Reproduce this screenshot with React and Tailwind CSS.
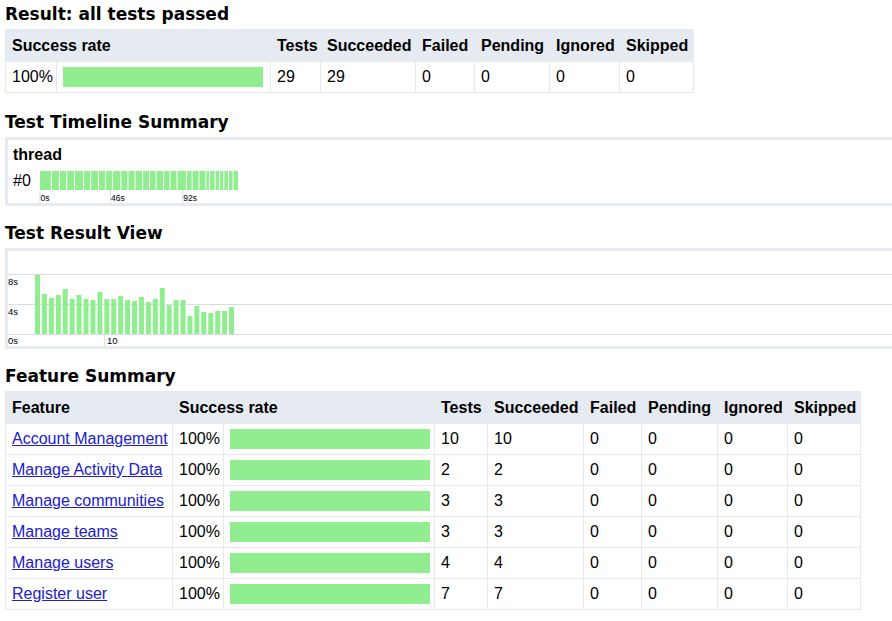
import React from 'react'

const durations = [59, 40, 36, 39, 45, 35, 39, 35, 34, 42, 35, 35, 38, 34, 33, 37, 32, 35, 46, 29, 34, 34, 18, 28, 22, 21, 23, 23, 27]

const features = [
  { name: 'Account Management', tests: 10 },
  { name: 'Manage Activity Data', tests: 2 },
  { name: 'Manage communities', tests: 3 },
  { name: 'Manage teams', tests: 3 },
  { name: 'Manage users', tests: 4 },
  { name: 'Register user', tests: 7 },
]

const Heading = ({ children, className = '' }) => (
  <h2 className={`pl-[5px] h-[29px] leading-[29px] text-[17px] font-bold text-black ${className}`} style={{ fontFamily: '"DejaVu Sans", sans-serif' }}>
    {children}
  </h2>
)

const Bar = () => <div className='h-[20px] w-[200px] bg-[#90ee90]' />

const th = 'px-[6px] h-[32px] text-left font-bold bg-[#e6ebf2] border border-[#e6ebf2]'
const td = 'px-[6px] h-[31px] border border-[#e8e8e8]'

const Timeline = () => {
  const total = durations.reduce((a, b) => a + b, 0)
  const s = 199 / total
  let cum = 0
  return (
    <svg width='220' height='36' className='ml-[5px] block'>
      {durations.map((d, i) => {
        const x = 4 + cum * s
        cum += d
        return <rect key={i} x={x} y='4' width={Math.max(d * s - 1, 1)} height='19' fill='#90ee90' />
      })}
      {[[4, '0s'], [74.5, '46s'], [146.7, '92s']].map(([x, t]) => (
        <g key={t}>
          <line x1={x} x2={x} y1='23' y2='36' stroke='#dddddd' strokeWidth='1' />
          <text x={x + 0.5} y='34' fontSize='8.5' fill='#000' fontFamily='"Liberation Sans", sans-serif'>{t}</text>
        </g>
      ))}
    </svg>
  )
}

const ResultChart = () => (
  <svg width='900' height='95' className='block'>
    {[23, 53, 83].map((y) => (
      <line key={y} x1='0' x2='900' y1={y + 0.5} y2={y + 0.5} stroke='#dddddd' strokeWidth='1' />
    ))}
    <text x='0' y='34' fontSize='9.5' fontFamily='"Liberation Sans", sans-serif'>8s</text>
    <text x='0' y='64' fontSize='9.5' fontFamily='"Liberation Sans", sans-serif'>4s</text>
    <text x='0' y='93' fontSize='9.5' fontFamily='"Liberation Sans", sans-serif'>0s</text>
    <line x1='96.5' x2='96.5' y1='83' y2='95' stroke='#dddddd' strokeWidth='1' />
    <text x='99' y='93' fontSize='9.5' fontFamily='"Liberation Sans", sans-serif'>10</text>
    {durations.map((d, i) => (
      <rect key={i} x={27 + i * 6.93} y={83 - d} width='5' height={d} fill='#90ee90' />
    ))}
  </svg>
)

const App = () => {
  return (
    <div className='w-[892px] h-[621px] overflow-hidden bg-white text-black text-[16px]' style={{ fontFamily: '"Liberation Sans", Arial, sans-serif' }}>
      <Heading>Result: all tests passed</Heading>
      <table className='ml-[5px] border-collapse table-fixed w-[688px]'>
        <colgroup>
          <col className='w-[51px]' />
          <col className='w-[214px]' />
          <col className='w-[50px]' />
          <col className='w-[95px]' />
          <col className='w-[59px]' />
          <col className='w-[75px]' />
          <col className='w-[70px]' />
          <col className='w-[74px]' />
        </colgroup>
        <thead>
          <tr>
            <th colSpan={2} className={th}>Success rate</th>
            <th className={th}>Tests</th>
            <th className={th}>Succeeded</th>
            <th className={th}>Failed</th>
            <th className={th}>Pending</th>
            <th className={th}>Ignored</th>
            <th className={th}>Skipped</th>
          </tr>
        </thead>
        <tbody>
          <tr>
            <td className={td}>100%</td>
            <td className={td}><Bar /></td>
            <td className={td}>29</td>
            <td className={td}>29</td>
            <td className={td}>0</td>
            <td className={td}>0</td>
            <td className={td}>0</td>
            <td className={td}>0</td>
          </tr>
        </tbody>
      </table>

      <Heading className='mt-[15px]'>Test Timeline Summary</Heading>
      <div className='ml-[5px] w-[900px] border-[3px] border-[#e6ebf2] pl-[5px] pt-[6px]'>
        <div className='h-[18px] leading-[18px] font-bold'>thread</div>
        <div className='mt-[3px] flex items-start'>
          <span className='mt-[5px] leading-[18px]'>#0</span>
          <Timeline />
        </div>
      </div>

      <Heading className='mt-[13px]'>Test Result View</Heading>
      <div className='ml-[5px] w-[900px] border-[3px] border-[#e6ebf2]'>
        <ResultChart />
      </div>

      <Heading className='mt-[13px]'>Feature Summary</Heading>
      <table className='ml-[5px] border-collapse table-fixed w-[855px]'>
        <colgroup>
          <col className='w-[167px]' />
          <col className='w-[51px]' />
          <col className='w-[211px]' />
          <col className='w-[53px]' />
          <col className='w-[96px]' />
          <col className='w-[58px]' />
          <col className='w-[76px]' />
          <col className='w-[70px]' />
          <col className='w-[73px]' />
        </colgroup>
        <thead>
          <tr>
            <th className={th}>Feature</th>
            <th colSpan={2} className={th}>Success rate</th>
            <th className={th}>Tests</th>
            <th className={th}>Succeeded</th>
            <th className={th}>Failed</th>
            <th className={th}>Pending</th>
            <th className={th}>Ignored</th>
            <th className={th}>Skipped</th>
          </tr>
        </thead>
        <tbody>
          {features.map((f) => (
            <tr key={f.name}>
              <td className={`${td} whitespace-nowrap`}>
                <a href='#' className='text-[#2020cc] underline'>{f.name}</a>
              </td>
              <td className={td}>100%</td>
              <td className={td}><Bar /></td>
              <td className={td}>{f.tests}</td>
              <td className={td}>{f.tests}</td>
              <td className={td}>0</td>
              <td className={td}>0</td>
              <td className={td}>0</td>
              <td className={td}>0</td>
            </tr>
          ))}
        </tbody>
      </table>
    </div>
  )
}

export default App
